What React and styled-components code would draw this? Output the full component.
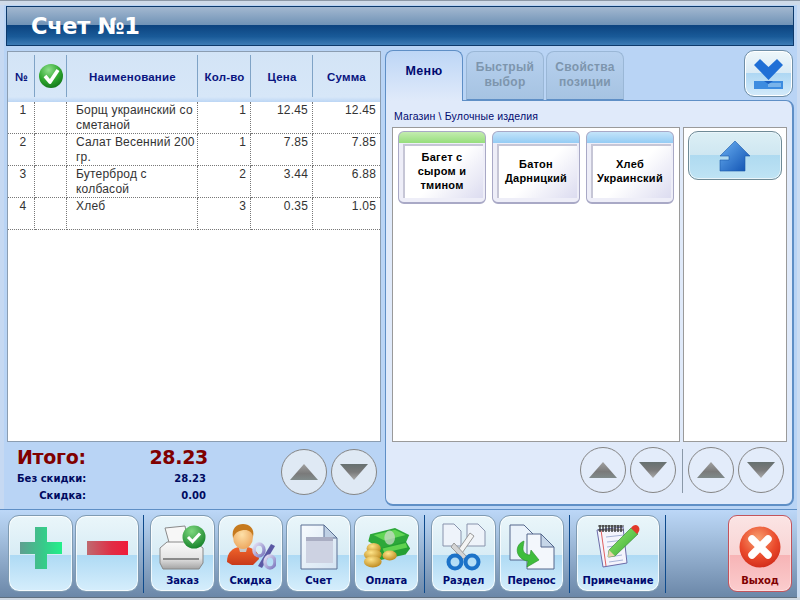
import React from "react";
import styled, { createGlobalStyle } from "styled-components";

const GlobalStyle = createGlobalStyle`
  html, body {
    margin: 0;
    padding: 0;
    background: #b9d4f5;
  }
  * {
    box-sizing: border-box;
  }
`;

const Page = styled.div`
  width: 800px;
  height: 600px;
  overflow: hidden;
  display: flex;
  flex-direction: column;
  padding-top: 6px;
  background: #b9d4f5;
  box-shadow:
    inset 0 1px 0 #8c98a6,
    inset 0 5px 0 #cfdbe9,
    inset 0 -3px 0 #d0d8e2,
    inset -3px 0 0 #cbdcf2,
    inset 4px 0 0 #c6d9f2;
  font-family: "Liberation Sans", Arial, sans-serif;
`;

const TitleBar = styled.header`
  height: 40px;
  margin: 0 6px 0 6px;
  display: flex;
  align-items: center;
  padding-left: 24px;
  border: 1px solid #0d3a6c;
  background: linear-gradient(
    #a3b8d0 0,
    #6f92b6 48%,
    #0c437f 48%,
    #195a98 78%,
    #3d7cb6 100%
  );
`;

const Title = styled.h1`
  margin: 0;
  color: #fff;
  font: bold 22.5px "DejaVu Sans", sans-serif;
  letter-spacing: -0.3px;
`;

const Main = styled.main`
  height: 460px;
  flex-shrink: 0;
  display: flex;
  padding: 5px 6px 0 7px;
  gap: 4px;
`;

const LeftColumn = styled.section`
  width: 374px;
  display: flex;
  flex-direction: column;
`;

const TableBox = styled.div`
  height: 391px;
  flex-shrink: 0;
  background: #fff;
  border: 1px solid #8b9db1;
`;

const OrderTable = styled.table`
  width: 372px;
  table-layout: fixed;
  border-collapse: separate;
  border-spacing: 0;
`;

const HeadCell = styled.th`
  height: 50px;
  padding: 0;
  background: linear-gradient(#d3e4f6 0, #d7e7f8 90%, #bcd6f5 100%);
  color: #0a1580;
  font: bold 11.5px "Liberation Sans", sans-serif;
  letter-spacing: 0.2px;
  text-align: center;
  vertical-align: middle;
  position: relative;
  &:not(:last-child)::after {
    content: "";
    position: absolute;
    right: 0;
    top: 3px;
    bottom: 5px;
    width: 1px;
    background: #7fa3c6;
  }
`;

const Cell = styled.td`
  height: 32px;
  padding: 1px 4px 0 4px;
  vertical-align: top;
  color: #333;
  font-size: 12px;
  line-height: 15px;
  letter-spacing: 0.2px;
  text-align: ${p => p.$align || "left"};
  border-bottom: 1px dotted #777;
  &:not(:last-child) {
    border-right: 1px dotted #777;
  }
`;

const NumCell = styled(Cell)`
  padding-left: 8px;
  text-align: center;
`;

const NameCell = styled(Cell)`
  padding-left: 9px;
  padding-right: 0;
`;

const TotalsRow = styled.div`
  flex: 1;
  display: flex;
  padding: 1px 4px 0 10px;
`;

const Totals = styled.div`
  width: 191px;
  color: #000a60;
  font: bold 10px "DejaVu Sans", sans-serif;
  white-space: nowrap;
`;

const TotalLine = styled.div`
  height: 17px;
  display: flex;
  justify-content: space-between;
  align-items: center;
  padding-right: 2px;
  & > span:first-child {
    width: 69px;
    text-align: right;
  }
`;

const GrandTotal = styled.div`
  height: 27px;
  display: flex;
  justify-content: space-between;
  align-items: center;
  color: #800000;
  font: bold 19px "DejaVu Sans", sans-serif;
  letter-spacing: -0.3px;
`;

const Pager = styled.div`
  display: flex;
  gap: 4px;
  align-items: flex-start;
  margin-left: ${p => p.$left || 0}px;
  padding-top: ${p => p.$top || 0}px;
`;

const RoundButton = styled.button`
  width: 46px;
  height: 46px;
  padding: 0;
  border-radius: 50%;
  border: 1px solid #858585;
  background: ${p => p.$light ? "#e3ecfa" : "#dfe9f4"};
  display: flex;
  align-items: center;
  justify-content: center;
`;

const RightColumn = styled.section`
  width: 409px;
  display: flex;
  flex-direction: column;
`;

const TabRow = styled.div`
  height: 50px;
  margin-top: -1px;
  display: flex;
  align-items: flex-end;
  gap: 2px;
  position: relative;
  z-index: 1;
`;

const Tab = styled.div`
  width: 78px;
  height: ${p => p.$active ? 51 : 49}px;
  margin-bottom: ${p => p.$active ? -1 : 0}px;
  margin-right: ${p => p.$active ? 1 : 0}px;
  display: flex;
  align-items: center;
  justify-content: center;
  text-align: center;
  padding-bottom: ${p => p.$active ? 9 : 2}px;
  border-radius: 8px 8px 0 0;
  border: 1px solid ${p => p.$active ? "#5f8fc6" : "#9ab7d6"};
  border-bottom: ${p => p.$active ? "none" : "1px solid #5f8fc6"};
  background: ${p => p.$active
    ? "linear-gradient(#bdd6f6, #e0eafa)"
    : "linear-gradient(#b7d1ef, #a6c3e2)"};
  color: ${p => p.$active ? "#000a70" : "#7d95ad"};
  font: ${p => p.$active ? "bold 12.5px" : "bold 12px"}/15px "Liberation Sans", sans-serif;
  letter-spacing: 0.3px;
`;

const CollapseButton = styled.button`
  width: 49px;
  height: 47px;
  margin: 0 1px 3px auto;
  padding: 0;
  border-radius: 10px;
  border: 1px solid #6f8fa8;
  box-shadow: inset 0 0 0 1px #fff;
  background: linear-gradient(#eef7fb 0, #d8eaf5 50%, #aed7f3 50%, #d3eafa 100%);
  display: flex;
  align-items: center;
  justify-content: center;
`;

const MenuPanel = styled.div`
  flex: 1;
  display: flex;
  flex-direction: column;
  padding: 0 5px 0 6px;
  background: #e0eafa;
  border: 1px solid #5f8fc6;
  border-width: 1px 2px 2px 1px;
  border-radius: 0 8px 8px 8px;
`;

const Breadcrumb = styled.div`
  height: 26px;
  padding: 9px 0 0 2px;
  color: #000a70;
  font-size: 10.5px;
  line-height: 13px;
  letter-spacing: 0.15px;
`;

const Boards = styled.div`
  height: 315px;
  display: flex;
  gap: 3px;
`;

const ItemBoard = styled.div`
  width: 289px;
  display: flex;
  gap: 6px;
  align-items: flex-start;
  padding: 3px 5px;
  background: #fff;
  border: 1px solid #9a9a9a;
`;

const SideBoard = styled.div`
  width: 104px;
  padding: 3px 4px;
  background: #fff;
  border: 1px solid #9a9a9a;
`;

const Item = styled.button`
  width: 88px;
  height: 73px;
  padding: 12px 2px 4px 4px;
  border-radius: 6px;
  border: 1px solid #a9a9c6;
  border-bottom-width: 2px;
  background: linear-gradient(${p => p.$strip} 0, ${p => p.$stripEnd} 11px, #eeeef8 11px);
`;

const ItemFace = styled.div`
  height: 100%;
  display: flex;
  align-items: center;
  justify-content: center;
  text-align: center;
  padding: 0 4px 2px 0;
  border-left: 2px solid #c6c6d6;
  border-top: 2px solid #c6c6d6;
  background: linear-gradient(135deg, #fff 50%, #dcdcf0 100%);
  color: #000;
  font: bold 11px/14px "Liberation Sans", sans-serif;
  letter-spacing: 0.25px;
`;

const UpButton = styled.button`
  width: 94px;
  height: 49px;
  padding: 0;
  border-radius: 10px;
  border: 1px solid #6f8a96;
  box-shadow: inset 0 0 0 1px #eaf5fa;
  background: linear-gradient(#dceff5 0, #cfe7f1 48%, #aedaf0 48%, #bfe3f4 100%);
  display: flex;
  align-items: center;
  justify-content: center;
`;

const PagerRow = styled.div`
  flex: 1;
  display: flex;
  justify-content: flex-end;
  align-items: flex-start;
  padding: 5px 3px 0 0;
`;

const PagerDivider = styled.div`
  width: 1px;
  height: 44px;
  margin: 2px 5px 0 6px;
  background: #8a98a8;
`;

const Toolbar = styled.footer`
  flex: 1;
  margin: 3px 3px 2px 0;
  display: flex;
  align-items: flex-start;
  padding: 5px 5px 0 8px;
  border-top: 1px solid #5f8fc6;
  border-bottom: 1px solid #5f6f80;
  background: linear-gradient(#bcd7f7 0, #a9c5e4 25%, #6b87a8 100%);
`;

const ToolGroup = styled.div`
  display: flex;
  gap: ${p => p.$gap || 3}px;
`;

const ToolDivider = styled.div`
  width: 1px;
  height: 78px;
  margin: 0 ${p => p.$right || 6}px 0 ${p => p.$left || 5}px;
  background: #0e4a8c;
`;

const ToolButton = styled.button`
  width: ${p => p.$width || 65}px;
  height: 77px;
  padding: 0;
  display: flex;
  flex-direction: column;
  align-items: center;
  border-radius: 11px;
  border: 1px solid #7f9bb2;
  box-shadow: inset 0 0 0 1px rgba(255, 255, 255, 0.75);
  background: linear-gradient(#eaf6fa 0, #d8ecf5 52%, #aedaf4 52%, #d6eefc 100%);
`;

const ExitButton = styled(ToolButton)`
  margin-left: auto;
  border: 1px solid #c2545c;
  border-radius: 9px;
  box-shadow: inset 0 0 0 1px rgba(255, 235, 235, 0.6);
  background: linear-gradient(#fbe4e4 0, #f8d4d4 52%, #f7b4b6 52%, #fbcccd 100%);
`;

const IconSlot = styled.div`
  height: 59px;
  width: 100%;
  flex-shrink: 0;
  display: flex;
  align-items: center;
  justify-content: center;
  padding-top: ${p => p.$top || 3}px;
`;

const ToolLabel = styled.span`
  color: ${p => p.$red ? "#800000" : "#000a70"};
  font: bold 10px "DejaVu Sans", sans-serif;
  letter-spacing: -0.1px;
`;

const CheckMark = () => (
  <svg width="26" height="26" viewBox="0 0 26 26">
    <defs>
      <radialGradient id="chk" cx="40%" cy="25%" r="85%">
        <stop offset="0" stopColor="#8fe08c" />
        <stop offset="0.55" stopColor="#2ea62e" />
        <stop offset="1" stopColor="#0d6b18" />
      </radialGradient>
    </defs>
    <circle cx="13" cy="13" r="12" fill="url(#chk)" />
    <path d="M7 13l5 6 8-12" fill="none" stroke="#fff" strokeWidth="3.6" strokeLinejoin="round" />
  </svg>
);

const Triangle = ({ down }) => (
  <svg width="30" height="18" viewBox="0 0 30 18">
    <defs>
      <linearGradient id="triUp" x1="0" y1="0" x2="0" y2="1">
        <stop offset="0" stopColor="#a0a0a0" />
        <stop offset="0.6" stopColor="#7a7a7a" />
        <stop offset="1" stopColor="#808a8a" />
      </linearGradient>
      <linearGradient id="triDown" x1="0" y1="0" x2="0" y2="1">
        <stop offset="0" stopColor="#667070" />
        <stop offset="0.5" stopColor="#7a7a7a" />
        <stop offset="1" stopColor="#ababab" />
      </linearGradient>
    </defs>
    {down
      ? <path d="M1 1h28L15 17z" fill="url(#triDown)" />
      : <path d="M15 1l14 16H1z" fill="url(#triUp)" />}
  </svg>
);

const CollapseIcon = () => (
  <svg width="29" height="30" viewBox="0 0 29 30">
    <path d="M0 6L6 0l8.5 8L23 0l6 6-14.5 15z" fill="#1f6fd6" />
    <rect y="22" width="29" height="8" fill="#3d8ce0" />
    <rect x="14" y="24" width="13" height="4" fill="#79b3ea" />
    <path d="M10 22h9l-4.5 3z" fill="#1a5fc0" />
  </svg>
);

const UpArrowIcon = () => (
  <svg width="32" height="32" viewBox="0 0 32 32">
    <defs>
      <linearGradient id="upa" x1="0" y1="0" x2="1" y2="1">
        <stop offset="0" stopColor="#6ab0f2" />
        <stop offset="1" stopColor="#0d4fb0" />
      </linearGradient>
    </defs>
    <path d="M16 1l15 15h-5v15H1V20h9v-4H1z" fill="url(#upa)" stroke="#1a58a8" strokeWidth="0.6" />
  </svg>
);

const PlusIcon = () => (
  <svg width="42" height="42" viewBox="0 0 42 42">
    <defs>
      <linearGradient id="plus" x1="0" y1="0" x2="1" y2="0">
        <stop offset="0" stopColor="#5f9f91" />
        <stop offset="0.55" stopColor="#38c98a" />
        <stop offset="1" stopColor="#22f08a" />
      </linearGradient>
    </defs>
    <path d="M15 0h12v15h15v12H27v15H15V27H0V15h15z" fill="url(#plus)" />
  </svg>
);

const MinusIcon = () => (
  <svg width="41" height="14" viewBox="0 0 41 14">
    <defs>
      <linearGradient id="minus" x1="0" y1="0" x2="1" y2="0">
        <stop offset="0" stopColor="#bf6a70" />
        <stop offset="0.6" stopColor="#e02d45" />
        <stop offset="1" stopColor="#f01a3a" />
      </linearGradient>
    </defs>
    <rect width="41" height="14" fill="url(#minus)" />
  </svg>
);

const PrinterIcon = () => (
  <svg width="47" height="45" viewBox="0 0 47 45">
    <defs>
      <linearGradient id="prn" x1="0" y1="0" x2="0" y2="1">
        <stop offset="0" stopColor="#fafafa" />
        <stop offset="0.6" stopColor="#e4e4e4" />
        <stop offset="1" stopColor="#a4a4a4" />
      </linearGradient>
      <radialGradient id="prnChk" cx="40%" cy="25%" r="85%">
        <stop offset="0" stopColor="#7ed87e" />
        <stop offset="1" stopColor="#0d7a22" />
      </radialGradient>
    </defs>
    <path d="M6 3l20-2 3 16-18 4z" fill="#f7f7f7" stroke="#8a8a8a" />
    <path d="M1 23l7-6h28l8 6v15l-4 6H4l-3-6z" fill="url(#prn)" stroke="#888" />
    <path d="M4 33h36v2H4z" fill="#8a8a8a" />
    <circle cx="35" cy="12" r="11.5" fill="url(#prnChk)" />
    <path d="M29 12l4.5 4.5 7.5-8" fill="none" stroke="#fff" strokeWidth="3" />
  </svg>
);

const PersonIcon = () => (
  <svg width="50" height="46" viewBox="0 0 50 46">
    <defs>
      <radialGradient id="face" cx="45%" cy="40%" r="65%">
        <stop offset="0" stopColor="#fde0a8" />
        <stop offset="1" stopColor="#eca55c" />
      </radialGradient>
      <linearGradient id="body" x1="0" y1="0" x2="0" y2="1">
        <stop offset="0" stopColor="#f0642a" />
        <stop offset="1" stopColor="#c83a1a" />
      </linearGradient>
      <linearGradient id="pct" x1="0" y1="0" x2="1" y2="1">
        <stop offset="0" stopColor="#e4e0f4" />
        <stop offset="1" stopColor="#7c78c0" />
      </linearGradient>
    </defs>
    <path d="M1 38c0-10 6-14 12-15h8c6 1 12 5 12 12l-6 6H6z" fill="url(#body)" />
    <path d="M12 21h10l-2 7h-6z" fill="#c8c8c8" />
    <ellipse cx="17" cy="13" rx="10" ry="12" fill="url(#face)" />
    <path d="M7 14C5 4 11 0 17 0s12 4 10 13c-1-5-4-7-8-7-5 0-10 2-12 8z" fill="#c67a1e" />
    <path d="M45 20l4 2-13 22-4-2z" fill="#5a58a4" />
    <ellipse cx="33" cy="26" rx="5" ry="6" fill="none" stroke="url(#pct)" strokeWidth="3.5" />
    <ellipse cx="44" cy="38" rx="5" ry="6" fill="none" stroke="url(#pct)" strokeWidth="3.5" />
  </svg>
);

const DocIcon = () => (
  <svg width="38" height="46" viewBox="0 0 38 46">
    <defs>
      <linearGradient id="doc" x1="0" y1="0" x2="1" y2="1">
        <stop offset="0" stopColor="#f7fbfe" />
        <stop offset="1" stopColor="#d4e4f2" />
      </linearGradient>
    </defs>
    <path d="M1 1h23l13 13v31H1z" fill="url(#doc)" stroke="#5a6f93" />
    <path d="M24 1v13h13z" fill="#bfd0e4" stroke="#5a6f93" />
    <rect x="6" y="13" width="27" height="4" fill="#a9adc2" />
    <rect x="6" y="17" width="27" height="22" fill="#cdd2e2" />
  </svg>
);

const MoneyIcon = () => (
  <svg width="48" height="41" viewBox="0 0 54 46">
    <defs>
      <radialGradient id="coin" cx="40%" cy="30%" r="80%">
        <stop offset="0" stopColor="#ffe58a" />
        <stop offset="1" stopColor="#b57e12" />
      </radialGradient>
    </defs>
    <path d="M8 8l28-7 16 8-4 9-28 7L6 16z" fill="#2da83a" />
    <path d="M12 9l24-6 12 6-24 6z" fill="#62d654" />
    <path d="M18 24l30-8 5 8-5 7-28 6-6-6z" fill="#25a034" />
    <path d="M22 24l26-6 2 5-26 6z" fill="#5fd24f" />
    <ellipse cx="30" cy="12" rx="6" ry="8" fill="#c9d9c8" opacity="0.75" />
    <ellipse cx="12" cy="24" rx="8" ry="6" fill="url(#coin)" />
    <ellipse cx="11" cy="31" rx="10" ry="6" fill="url(#coin)" />
    <ellipse cx="11" cy="39" rx="10" ry="6.5" fill="url(#coin)" />
    <ellipse cx="30" cy="32" rx="8" ry="5.5" fill="url(#coin)" />
  </svg>
);

const SmallDoc = ({ x, y }) => (
  <path
    d={`M${x} ${y}h11l7 7v15h-18z`}
    fill="#eef3fa"
    stroke="#8893ac"
  />
);

const ScissorsIcon = () => (
  <svg width="44" height="48" viewBox="0 0 44 48">
    <SmallDoc x={1} y={1} />
    <SmallDoc x={25} y={1} />
    <path d="M28 10l4 3-14 20-4-3z" fill="#f4f4f4" stroke="#9a9a9a" />
    <path d="M12 20l13 14-4 2L9 24z" fill="#d4d4d4" stroke="#9a9a9a" />
    <circle cx="13" cy="39" r="6.5" fill="none" stroke="#1c72c8" strokeWidth="4" />
    <circle cx="30" cy="39" r="6.5" fill="none" stroke="#1c72c8" strokeWidth="4" />
  </svg>
);

const TransferIcon = () => (
  <svg width="46" height="46" viewBox="0 0 46 46">
    <path d="M1 1h14l11 11v24H1z" fill="#eaf2fb" stroke="#54678c" />
    <path d="M18 10h14l13 13v22H18z" fill="#f3f7fc" stroke="#54678c" />
    <path d="M32 10v13h13z" fill="#c6d6e8" stroke="#54678c" />
    <path d="M15 17c-6 2-9 9-5 15 2 3 6 5 9 5l-1 6 12-7-8-10-1 5c-4 0-7-3-7-6 0-3 1-6 1-8z" fill="#3fbd3c" stroke="#2a8e2a" strokeWidth="0.6" />
  </svg>
);

const NoteIcon = () => (
  <svg width="46" height="46" viewBox="0 0 46 46">
    <defs>
      <linearGradient id="pencil" x1="0" y1="0" x2="1" y2="1">
        <stop offset="0" stopColor="#9aea70" />
        <stop offset="1" stopColor="#2fa82f" />
      </linearGradient>
    </defs>
    <path d="M2 6l26-3 4 36-24 4z" fill="#f4f4fc" stroke="#6c6ca8" />
    <path d="M6 6l5 36" stroke="#e06060" />
    <path d="M11 13l18-2M12 18l18-2M12 23l14-2M13 28l11-1M14 33l13-2M14 38l14-2" stroke="#a8b4d8" />
    <path d="M3 2h26M3 6h26" stroke="#444" strokeWidth="1.2" />
    <path d="M5 1v7M8 1v7M11 1v7M14 1v7M17 1v7M20 1v7M23 1v7M26 1v7" stroke="#333" strokeWidth="1.4" />
    <path d="M36 4l7 6-23 22-7 1 1-7z" fill="url(#pencil)" stroke="#2b7d2b" strokeWidth="0.6" />
    <path d="M13 33l1-7 6 6z" fill="#e8d2a8" />
    <path d="M36 4c2-3 5-4 7-2s2 5-1 8z" fill="#e23a2a" />
  </svg>
);

const ExitIcon = () => (
  <svg width="42" height="42" viewBox="0 0 42 42">
    <defs>
      <radialGradient id="exit" cx="45%" cy="30%" r="75%">
        <stop offset="0" stopColor="#f7a070" />
        <stop offset="0.6" stopColor="#ea4a2c" />
        <stop offset="1" stopColor="#cf2818" />
      </radialGradient>
    </defs>
    <circle cx="21" cy="21" r="20.5" fill="url(#exit)" />
    <path d="M13 13l16 16M29 13L13 29" stroke="#fff" strokeWidth="7.5" strokeLinecap="round" />
  </svg>
);

const rows = [
  { n: 1, name: "Борщ украинский со сметаной", qty: 1, price: "12.45", sum: "12.45" },
  { n: 2, name: "Салат Весенний 200 гр.", qty: 1, price: "7.85", sum: "7.85" },
  { n: 3, name: "Бутерброд с колбасой", qty: 2, price: "3.44", sum: "6.88" },
  { n: 4, name: "Хлеб", qty: 3, price: "0.35", sum: "1.05" },
];

const items = [
  { title: ["Багет с", "сыром и", "тмином"], strip: "#c4ecb0", stripEnd: "#96de7c" },
  { title: ["Батон", "Дарницкий"], strip: "#c4e4fa", stripEnd: "#94ccf4" },
  { title: ["Хлеб", "Украинский"], strip: "#c4e4fa", stripEnd: "#94ccf4" },
];

const PagerButtons = ({ light, left, top }) => (
  <Pager $left={left} $top={top}>
    <RoundButton $light={light}><Triangle /></RoundButton>
    <RoundButton $light={light}><Triangle down /></RoundButton>
  </Pager>
);

export default function App() {
  return (
    <Page>
      <GlobalStyle />
      <TitleBar>
        <Title>Счет №1</Title>
      </TitleBar>
      <Main>
        <LeftColumn>
          <TableBox>
            <OrderTable>
              <colgroup>
                <col width="27" />
                <col width="32" />
                <col width="131" />
                <col width="53" />
                <col width="62" />
                <col width="67" />
              </colgroup>
              <thead>
                <tr>
                  <HeadCell>№</HeadCell>
                  <HeadCell><CheckMark /></HeadCell>
                  <HeadCell>Наименование</HeadCell>
                  <HeadCell>Кол-во</HeadCell>
                  <HeadCell>Цена</HeadCell>
                  <HeadCell>Сумма</HeadCell>
                </tr>
              </thead>
              <tbody>
                {rows.map(r => (
                  <tr key={r.n}>
                    <NumCell>{r.n}</NumCell>
                    <Cell />
                    <NameCell>{r.name}</NameCell>
                    <Cell $align="right">{r.qty}</Cell>
                    <Cell $align="right">{r.price}</Cell>
                    <Cell $align="right">{r.sum}</Cell>
                  </tr>
                ))}
              </tbody>
            </OrderTable>
          </TableBox>
          <TotalsRow>
            <Totals>
              <GrandTotal><span>Итого:</span><span>28.23</span></GrandTotal>
              <TotalLine><span>Без скидки:</span><span>28.23</span></TotalLine>
              <TotalLine><span>Скидка:</span><span>0.00</span></TotalLine>
            </Totals>
            <PagerButtons left={73} top={6} />
          </TotalsRow>
        </LeftColumn>
        <RightColumn>
          <TabRow>
            <Tab $active>Меню</Tab>
            <Tab>Быстрый<br />выбор</Tab>
            <Tab>Свойства<br />позиции</Tab>
            <CollapseButton><CollapseIcon /></CollapseButton>
          </TabRow>
          <MenuPanel>
            <Breadcrumb>Магазин \ Булочные изделия</Breadcrumb>
            <Boards>
              <ItemBoard>
                {items.map(it => (
                  <Item key={it.title[0]} $strip={it.strip} $stripEnd={it.stripEnd}>
                    <ItemFace>
                      <div>{it.title.map(t => <div key={t}>{t}</div>)}</div>
                    </ItemFace>
                  </Item>
                ))}
              </ItemBoard>
              <SideBoard>
                <UpButton><UpArrowIcon /></UpButton>
              </SideBoard>
            </Boards>
            <PagerRow>
              <PagerButtons light />
              <PagerDivider />
              <PagerButtons light />
            </PagerRow>
          </MenuPanel>
        </RightColumn>
      </Main>
      <Toolbar>
        <ToolGroup $gap={2}>
          <ToolButton $width={65}><IconSlot $top={4}><PlusIcon /></IconSlot></ToolButton>
          <ToolButton $width={64}><IconSlot $top={4}><MinusIcon /></IconSlot></ToolButton>
        </ToolGroup>
        <ToolDivider $left={4} />
        <ToolGroup>
          <ToolButton><IconSlot><PrinterIcon /></IconSlot><ToolLabel>Заказ</ToolLabel></ToolButton>
          <ToolButton><IconSlot><PersonIcon /></IconSlot><ToolLabel>Скидка</ToolLabel></ToolButton>
          <ToolButton><IconSlot><DocIcon /></IconSlot><ToolLabel>Счет</ToolLabel></ToolButton>
          <ToolButton><IconSlot><MoneyIcon /></IconSlot><ToolLabel>Оплата</ToolLabel></ToolButton>
        </ToolGroup>
        <ToolDivider />
        <ToolGroup>
          <ToolButton><IconSlot><ScissorsIcon /></IconSlot><ToolLabel>Раздел</ToolLabel></ToolButton>
          <ToolButton><IconSlot><TransferIcon /></IconSlot><ToolLabel>Перенос</ToolLabel></ToolButton>
        </ToolGroup>
        <ToolDivider />
        <ToolButton $width={84}><IconSlot><NoteIcon /></IconSlot><ToolLabel>Примечание</ToolLabel></ToolButton>
        <ToolDivider />
        <ExitButton $width={64}><IconSlot><ExitIcon /></IconSlot><ToolLabel $red>Выход</ToolLabel></ExitButton>
      </Toolbar>
    </Page>
  );
}
